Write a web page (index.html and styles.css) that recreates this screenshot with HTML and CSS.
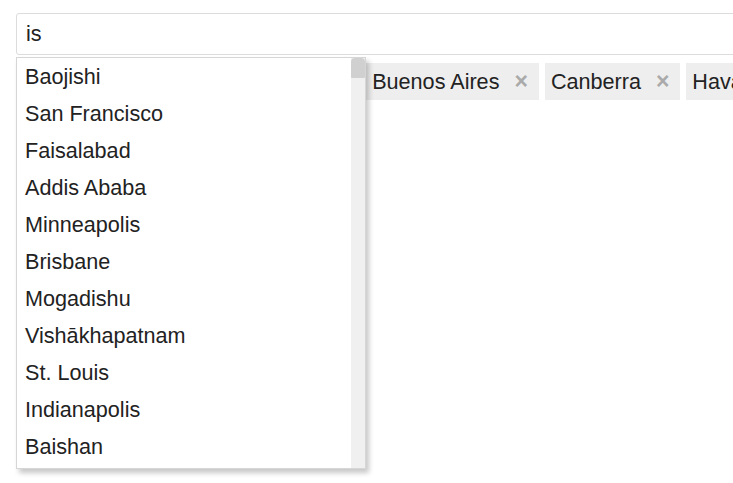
FILE: index.html
```html
<!DOCTYPE html>
<html>
<head>
<meta charset="utf-8">
<link rel="stylesheet" href="styles.css">
</head>
<body>
<div class="picker">
  <div class="field">is</div>
  <div class="tags">
    <span class="tag"><span class="tag-label">Addis Ababa</span><span class="tag-x">×</span></span>
    <span class="tag"><span class="tag-label">Bloemfontein</span><span class="tag-x">×</span></span>
    <span class="tag"><span class="tag-label">Buenos Aires</span><span class="tag-x">×</span></span>
    <span class="tag"><span class="tag-label">Canberra</span><span class="tag-x">×</span></span>
    <span class="tag"><span class="tag-label">Havana</span><span class="tag-x">×</span></span>
  </div>
  <div class="dropdown">
    <ul class="options">
      <li>Baojishi</li>
      <li>San Francisco</li>
      <li>Faisalabad</li>
      <li>Addis Ababa</li>
      <li>Minneapolis</li>
      <li>Brisbane</li>
      <li>Mogadishu</li>
      <li>Vishākhapatnam</li>
      <li>St. Louis</li>
      <li>Indianapolis</li>
      <li>Baishan</li>
      <li>Islamabad</li>
    </ul>
    <div class="scrollbar"><div class="thumb"></div></div>
  </div>
</div>
</body>
</html>
```
FILE: styles.css
```css
html {
  overflow: hidden;
}
html, body {
  margin: 0;
  padding: 0;
  background: #fff;
}
body {
  min-height: 483px;
  font-family: "Liberation Sans", Arial, sans-serif;
  font-size: 21.6px;
  color: #222;
}
.picker {
  position: relative;
  width: 820px;
  min-height: 470px;
  padding: 13px 0 0 16px;
}
.field {
  height: 40px;
  line-height: 40px;
  border: 1px solid #dcdcdc;
  border-radius: 3px;
  padding-left: 9px;
  box-sizing: content-box;
}
.tags {
  display: flex;
  flex-wrap: nowrap;
  gap: 6px;
  margin-top: 8px;
}
.tag {
  display: flex;
  align-items: center;
  flex: none;
  height: 37px;
  background: #eeeeee;
  padding: 0 11px 0 6px;
  white-space: nowrap;
}
.tag-x {
  margin-left: 15px;
  color: #aaa;
  font-weight: bold;
  font-size: 23px;
}
.dropdown {
  position: absolute;
  left: 16px;
  top: 57px;
  width: 348px;
  height: 410px;
  border: 1px solid #d6d6d6;
  background: #fff;
  display: flex;
  box-shadow: 3px 4px 5px rgba(0, 0, 0, 0.22);
  overflow: hidden;
}
.options {
  flex: 1;
  list-style: none;
  margin: 0;
  padding: 0;
}
.options li {
  height: 37px;
  line-height: 37px;
  padding-left: 8px;
  white-space: nowrap;
}
.scrollbar {
  width: 14px;
  background: #f0f0f0;
}
.thumb {
  height: 20px;
  background: #d0d0d0;
  border-radius: 4px 4px 1px 1px;
}
```
